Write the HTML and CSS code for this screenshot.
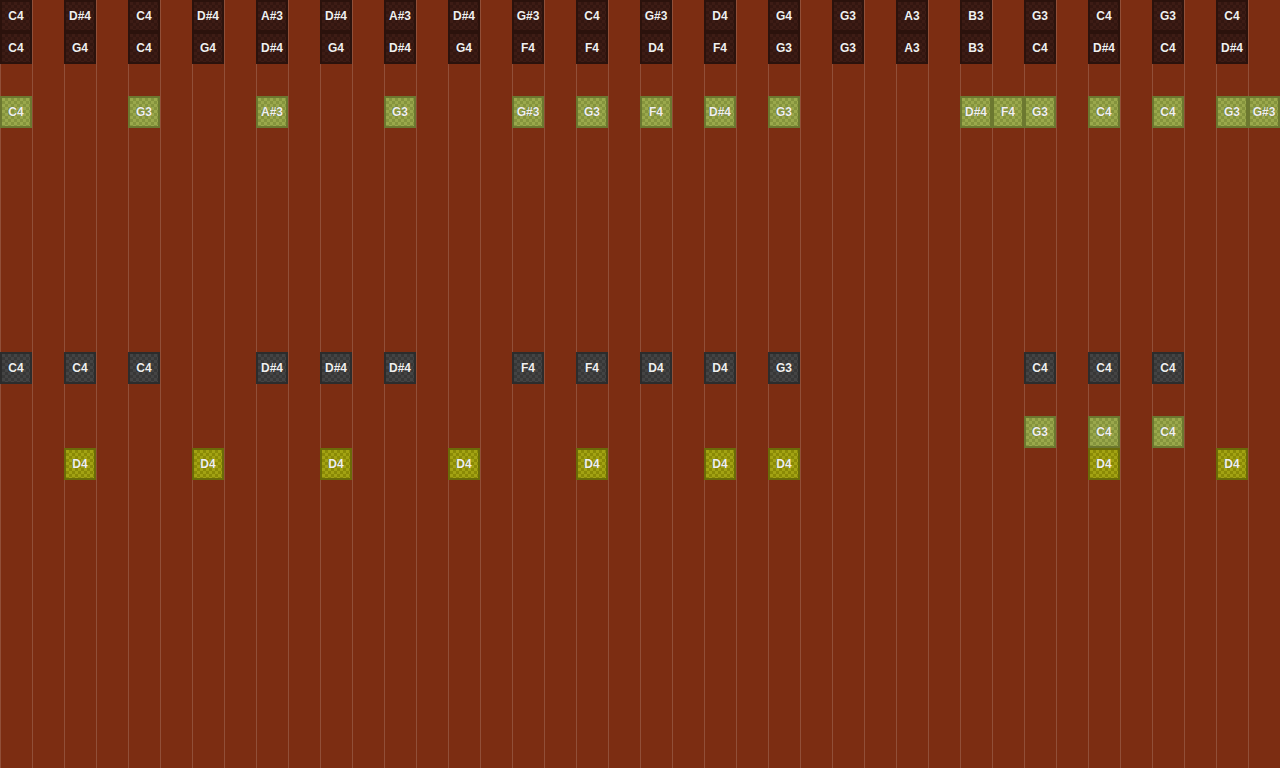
FILE: index.html
```html
<!DOCTYPE html>
<html lang="en">
<head>
    <meta charset="UTF-8">
    <meta name="viewport" content="width=device-width, initial-scale=1.0">
    <title>Note Grid</title>
    <link rel="stylesheet" href="styles.css">
</head>
<body>

    <div class="board" id="board"></div>

    <script>
        // each row: [row, kind, [[col, note], ...]]
        const rows = [
            [1, 'dark', [[1,'C4'],[3,'D#4'],[5,'C4'],[7,'D#4'],[9,'A#3'],[11,'D#4'],[13,'A#3'],[15,'D#4'],[17,'G#3'],[19,'C4'],[21,'G#3'],[23,'D4'],[25,'G4'],[27,'G3'],[29,'A3'],[31,'B3'],[33,'G3'],[35,'C4'],[37,'G3'],[39,'C4']]],
            [2, 'dark', [[1,'C4'],[3,'G4'],[5,'C4'],[7,'G4'],[9,'D#4'],[11,'G4'],[13,'D#4'],[15,'G4'],[17,'F4'],[19,'F4'],[21,'D4'],[23,'F4'],[25,'G3'],[27,'G3'],[29,'A3'],[31,'B3'],[33,'C4'],[35,'D#4'],[37,'C4'],[39,'D#4']]],
            [4, 'lime', [[1,'C4'],[5,'G3'],[9,'A#3'],[13,'G3'],[17,'G#3'],[19,'G3'],[21,'F4'],[23,'D#4'],[25,'G3'],[31,'D#4'],[32,'F4'],[33,'G3'],[35,'C4'],[37,'C4'],[39,'G3'],[40,'G#3']]],
            [12, 'gray', [[1,'C4'],[3,'C4'],[5,'C4'],[9,'D#4'],[11,'D#4'],[13,'D#4'],[17,'F4'],[19,'F4'],[21,'D4'],[23,'D4'],[25,'G3'],[33,'C4'],[35,'C4'],[37,'C4']]],
            [14, 'lime', [[33,'G3'],[35,'C4'],[37,'C4']]],
            [15, 'olive', [[3,'D4'],[7,'D4'],[11,'D4'],[15,'D4'],[19,'D4'],[23,'D4'],[25,'D4'],[35,'D4'],[39,'D4']]]
        ];

        const board = document.getElementById('board');
        rows.forEach(([row, kind, notes]) => {
            notes.forEach(([col, name]) => {
                const el = document.createElement('div');
                el.className = 'note ' + kind;
                el.style.gridRow = row;
                el.style.gridColumn = col;
                el.textContent = name;
                board.appendChild(el);
            });
        });
    </script>
</body>
</html>
```

FILE: styles.css
```css
body {
    margin: 0;
    padding: 0;
    background-color: #7c2d12;
    overflow: hidden;
}

.board {
    display: grid;
    grid-template-columns: repeat(40, 32px);
    grid-template-rows: repeat(24, 32px);
    width: 1280px;
    height: 768px;
    background-color: #7c2d12;
    background-image: linear-gradient(90deg, rgba(255, 255, 255, 0.16) 1px, transparent 1px);
    background-size: 32px 100%;
    background-position: 0 0;
}

.note {
    box-sizing: border-box;
    width: 32px;
    height: 32px;
    border: 2px solid;
    display: flex;
    justify-content: center;
    align-items: center;
    font-family: "Liberation Sans", Arial, sans-serif;
    font-size: 12px;
    font-weight: bold;
    color: #f0f0f0;
    text-shadow: 0 0 1px rgba(0, 0, 0, 0.4);
    background-size: 6px 6px;
}

.dark {
    border-color: #2b120c;
    background-color: #3d1c15;
    background-image: conic-gradient(#331610 25%, transparent 0 50%, #331610 0 75%, transparent 0);
}

.lime {
    border-color: #6c7830;
    background-color: #9aa84c;
    background-image: conic-gradient(#85943d 25%, transparent 0 50%, #85943d 0 75%, transparent 0);
}

.gray {
    border-color: #2c2c2c;
    background-color: #444444;
    background-image: conic-gradient(#373737 25%, transparent 0 50%, #373737 0 75%, transparent 0);
}

.olive {
    border-color: #6b6b08;
    background-color: #a3a313;
    background-image: conic-gradient(#8a8a06 25%, transparent 0 50%, #8a8a06 0 75%, transparent 0);
}
```
